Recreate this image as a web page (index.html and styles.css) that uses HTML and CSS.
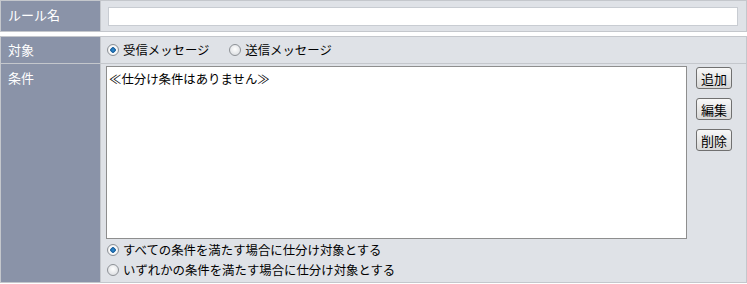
FILE: index.html
```html
<!DOCTYPE html>
<html lang="ja">
<head>
    <meta charset="UTF-8">
    <title>仕分けルール</title>
    <link rel="stylesheet" href="styles.css">
</head>
<body>
    <table class="form-table">
        <tr>
            <th>ルール名</th>
            <td><input type="text" class="name-input"></td>
        </tr>
    </table>
    <table class="form-table second">
        <tr>
            <th class="short">対象</th>
            <td class="target">
                <label><input type="radio" name="target" checked>受信メッセージ</label>
                <label><input type="radio" name="target">送信メッセージ</label>
            </td>
        </tr>
        <tr>
            <th>条件</th>
            <td class="cond">
                <div class="cond-main">
                    <div class="cond-list">≪仕分け条件はありません≫</div>
                    <div class="cond-buttons">
                        <button type="button">追加</button>
                        <button type="button">編集</button>
                        <button type="button">削除</button>
                    </div>
                </div>
                <div class="cond-mode">
                    <label><input type="radio" name="mode" checked>すべての条件を満たす場合に仕分け対象とする</label>
                    <label><input type="radio" name="mode">いずれかの条件を満たす場合に仕分け対象とする</label>
                </div>
            </td>
        </tr>
    </table>
</body>
</html>
```

FILE: styles.css
```css
body { margin: 0; font-family: "Noto Sans CJK JP", "Liberation Sans", sans-serif; font-size: 12.4px; color: #000; background: #fff; }
.form-table { width: 747px; border-collapse: collapse; border: 1px solid #c4c7cc; }
.form-table.second { margin-top: 4px; }
.form-table th, .form-table td { border: 1px solid #c4c7cc; padding: 0; }
.form-table th { width: 85px; background: #8a93a8; color: #fff; font-size: 13px; font-weight: normal; text-align: left; vertical-align: top; padding: 5px 7px; line-height: 18px; }
.form-table th.short { padding: 4px 7px; }
.form-table td { background: #dfe2e7; }
.name-input { display: block; box-sizing: border-box; width: 630px; height: 19px; margin: 6px 7px 5px; border: 1px solid #c8ccd2; background: #fff; }
.target { padding-left: 5px !important; }
.target label { margin-right: 16px; display: inline-flex; align-items: center; line-height: 18px; }
input[type=radio] { appearance: none; box-sizing: border-box; margin: 0 4px 0 1px; width: 12px; height: 12px; border: 1px solid #8d9196; border-radius: 50%; background: radial-gradient(circle at 50% 40%, #fff, #d4d7db); flex: none; }
input[type=radio]:checked { background: radial-gradient(circle, #2f8fd6 0, #1b5f9c 2.5px, #fff 3px, #e4e6e8 6px); }
.cond { padding: 2px 0 2px 5px !important; vertical-align: top; }
.cond-main { display: flex; gap: 9px; }
.cond-list { box-sizing: border-box; width: 581px; height: 173px; background: #fff; border: 1px solid #8e8e8e; padding: 4px 2px; line-height: 17px; }
.cond-buttons { display: flex; flex-direction: column; gap: 9px; padding-top: 1px; }
.cond-buttons button { box-sizing: border-box; width: 36px; height: 22px; padding: 0; font-family: inherit; font-size: 13px; border: 1px solid #707070; border-radius: 3px; background: linear-gradient(#f8f8f8, #d8d8d8); }
.cond-mode { display: flex; flex-direction: column; padding-top: 1px; }
.cond-mode label { display: flex; align-items: center; height: 20px; }
```
